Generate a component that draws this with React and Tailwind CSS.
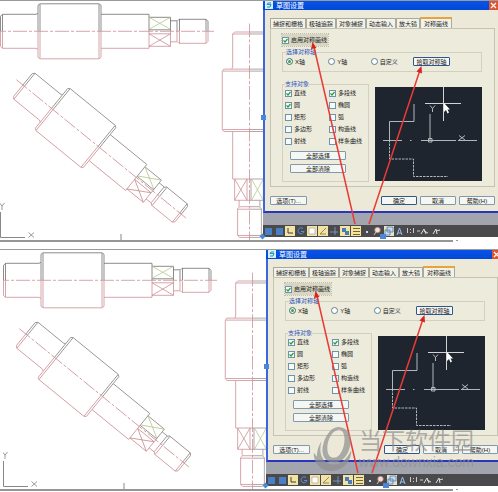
import { useId } from "react";

const TABS = ["捕捉和栅格", "极轴追踪", "对象捕捉", "动态输入", "放大镜"];

const OBJECTS = [
  { label: "直线", checked: true },
  { label: "多段线", checked: true },
  { label: "圆", checked: true },
  { label: "椭圆", checked: false },
  { label: "矩形", checked: false },
  { label: "弧", checked: false },
  { label: "多边形", checked: false },
  { label: "构造线", checked: false },
  { label: "射线", checked: false },
  { label: "样条曲线", checked: false },
];

const AXES = ["X轴", "Y轴", "自定义"];

// shaft outline along the x axis, upper half grey and lower half red
function Shaft({ transform, upper = "#6f6f6f" }) {
  return (
    <g transform={transform} fill="none" strokeWidth="0.8">
      <g stroke={upper}>
        <path d="M.5 0V-15L2.5-17H36L38-18V-26L40-27.500H99L101-26V-17H149V0M2.500 0V-17M40 0V-27M99 0V-27M38 0V-18M101 0V-17" />
        <path d="M149-14H170.500V0M149-1.500H170.500M170.500-10.500H177M177 0V-10L179-12H206L208-10V0M179.500 0V-12M206 0V-12" />
      </g>
      <path stroke="#b5c98a" d="M149-14L170.500-2M170.500-14L149-2" />
      <g stroke="#cc8f95">
        <path d="M.5 0V15L2.500 17H36L38 18V26L40 27.500H99L101 26V17H149V0M2.500 0V17M40 0V27M99 0V27M38 0V18M101 0V17" />
        <path d="M149 15H170.500V0M149 2.500H170.500M149 2.500L170.500 15M170.500 2.500L149 15M170.500 10.500H177M177 0V10L179 12H206L208 10V0M179.500 0V12M206 0V12" />
        <path strokeDasharray="14 2 3 2" d="M-8 0H214" />
      </g>
    </g>
  );
}

function Drawing() {
  return (
    <svg viewBox="0 0 263 240" preserveAspectRatio="xMaxYMin meet" className="block h-[240px] w-full">
      <Shaft transform="translate(0 31.300)" />
      <Shaft transform="translate(22.500 84.700) rotate(39.200) scale(.985)" upper="#8c8484" />
      <Shaft transform="translate(249.500 31.500) rotate(90) scale(.99)" upper="#a08c90" />
      <path d="M.5 212V237.500H25M121 234V240" fill="none" stroke="#888" />
      <path d="M-.5 203L2 206M4.500 203L2 206V210M28.500 232.500L34 237.500M34 232.500L28.500 237.500" fill="none" stroke="#999" />
    </svg>
  );
}

function Preview() {
  return (
    <svg viewBox="0 0 107 94" className="block h-[94px] w-[107px] bg-[#1e252f]">
      <g fill="none" stroke="#c3c7cb" strokeWidth="0.9">
        <path d="M39 17V34.500H14.500V53" />
        <path strokeDasharray="2.500 1" d="M14.500 53V72H38.500V89.500H73" />
        <path d="M8 53.500H27M35 53.500H36.500M46 53.500H81M83 53.500H102" />
        <path d="M55 27V53M53.500 51.500H57V55H53.500Z" />
        <path d="M55 18.500L57.500 21.500L60 18.500M57.500 21.500V25M84 48.500L90 53M90 48.500L84 53" />
        <path stroke="#e8e8e8" d="M68.500 0V34M50 16.500H86" />
      </g>
      <path fill="#fff" d="M69 16V25L71 23L72.500 26.500L74 25.500L72.500 22.500H75Z" />
    </svg>
  );
}

function Radio({ name, label, defaultChecked }) {
  return (
    <label className="flex items-center gap-[2px]">
      <input
        type="radio"
        name={name}
        defaultChecked={defaultChecked}
        className="size-[7px] appearance-none rounded-full border border-[#5d8293] bg-white checked:bg-[#3fa04c] checked:shadow-[inset_0_0_0_1px_white]"
      />
      {label}
    </label>
  );
}

function Check({ label, defaultChecked }) {
  return (
    <label className="flex h-[12px] items-center gap-[2px] whitespace-nowrap">
      <span className="grid">
        <input
          type="checkbox"
          defaultChecked={defaultChecked}
          className="peer col-start-1 row-start-1 size-[7px] appearance-none border border-[#6b94b0] bg-[#f8faf8]"
        />
        <svg viewBox="0 0 7 7" className="pointer-events-none invisible col-start-1 row-start-1 size-[7px] peer-checked:visible">
          <path d="M1.500 3.300L3 5L5.500 2" fill="none" stroke="#2f9a3c" strokeWidth="1.200" />
        </svg>
      </span>
      {label}
    </label>
  );
}

function Button({ className, children }) {
  return (
    <button
      type="button"
      className={`flex h-[9px] items-center justify-center whitespace-nowrap rounded-[1px] border bg-[#f6f6f2] leading-none ${className}`}
    >
      {children}
    </button>
  );
}

function StatusBar() {
  return (
    <div className="h-[12px] bg-[#4a4a4c]">
      <svg viewBox="0 0 184 12" className="block h-[12px] w-[184px]">
        <path fill="#4a7fc6" d="M2 3h7v7H2zM13 3h7v7h-7z" />
        <path fill="#f3e4a4" d="M22 1h10v10H22zM44 1h10v10H44zM55 1h10v10H55zM77 1h10v10H77zM88 1h10v10H88z" />
        <path fill="#e8e4c0" d="M121 1h10v10h-10z" />
        <path fill="none" stroke="#3e3e3e" d="M25 3v5h5" />
        <path fill="none" stroke="#5b8fd8" d="M40 3.500a3 3 0 1 0 1 3H38" />
        <path fill="#fff" stroke="#999" strokeWidth=".6" d="M46 3h6v6h-6z" />
        <path fill="none" stroke="#77704c" strokeWidth=".8" d="M57 9h6M57 9L63 3" />
        <path fill="none" stroke="#7fa5cf" strokeWidth=".8" d="M67 7h8M72 2v8" />
        <path fill="#477dbb" d="M79 3h4v3h3v4h-4V7h-3z" />
        <path fill="none" stroke="#75652c" d="M90 3.500h7M90 6.500h7M90 9.500h7" />
        <path fill="#c5d7ec" d="M103 6h2v2h-2z" />
        <circle cx="114.500" cy="5" r="2.800" fill="#eee1dc" stroke="#b77369" strokeWidth=".7" />
        <path stroke="#c8c8c8" d="M113 7L111 10" />
        <path fill="#c9dcf0" stroke="#426da4" strokeWidth=".7" d="M124 2h6v5h-6zM122 5h5v5h-5z" />
        <path fill="none" stroke="#9bc2f0" d="M134 10L136.500 3L139 10M135 8h3" />
        <path fill="none" stroke="#ddd" strokeWidth=".9" d="M144.500 3v5M147.500 4v1M147.500 7v1M150.500 3v5M154 6h3" />
        <path fill="none" stroke="#ddd" d="M158 9L161 4L163 9M161 6L165 8M170 9L173 4L174 9M173 6L177 5" />
      </svg>
    </div>
  );
}

function SettingsDialog() {
  const axisName = useId();

  return (
    <div className="relative w-[235px] shrink-0 text-[6px] leading-none text-[#222]">
      <div className="flex h-[10px] items-center justify-between bg-linear-to-b from-[#0a55e8] to-[#0048d8] pl-[2px] text-white">
        <div className="flex items-center gap-[3px]">
          <svg viewBox="0 0 8 8" className="size-[8px]">
            <path fill="#d9f0f7" d="M0 0h8v8H0z" />
            <path d="M6 2H3L2 3.500H6L5 6H2" fill="none" stroke="#2493bd" />
          </svg>
          <h2 className="text-[7px]">草图设置</h2>
        </div>
        <button type="button" aria-label="关闭" className="size-[9px] bg-[#dc5532]">
          <svg viewBox="0 0 9 9" className="size-[9px]">
            <path d="M2 2L7 7M7 2L2 7" stroke="#fff" strokeWidth="1.200" />
          </svg>
        </button>
      </div>

      <div className="border-b-2 border-l-2 border-b-[#2a35bd] border-l-[#3b66de] bg-[#ece9d8] pt-[7px] pr-[3px] pb-[6px] pl-[5px]">
        <div role="tablist" className="flex h-[11px] items-end">
          {TABS.map((tab) => (
            <button
              key={tab}
              type="button"
              role="tab"
              aria-selected="false"
              className="h-[10px] whitespace-nowrap border border-b-0 border-[#a9a99c] bg-[#f3f2e9] px-[2px]"
            >
              {tab}
            </button>
          ))}
          <button
            type="button"
            role="tab"
            aria-selected="true"
            className="h-[11px] whitespace-nowrap border border-t-2 border-b-0 border-[#a9a99c] border-t-[#e8a33c] bg-[#f3f2e9] px-[3px]"
          >
            对称画线
          </button>
        </div>

        <div role="tabpanel" className="h-[159px] border border-[#c5c3b2] bg-[#edebdc] pt-[5px] pr-[12px] pl-[11px]">
          <div className="flex">
            <div className="bg-[#d8d5c2] pr-px outline outline-dotted outline-[#c0bda9]">
              <Check label="启用对称画线" defaultChecked />
            </div>
          </div>

          <fieldset className="mt-[3px] h-[23px] border border-[#d3d0bd] pl-[3px]">
            <legend className="h-[6px] text-[#2b53b5]">选择对称轴</legend>
            <div className="mt-[2px] flex items-center">
              <div className="grid w-[127px] grid-cols-3">
                {AXES.map((axis, i) => (
                  <Radio key={axis} name={axisName} label={axis} defaultChecked={i === 0} />
                ))}
              </div>
              <Button className="w-[37px] border-[#2f568f]">拾取对称轴</Button>
            </div>
          </fieldset>

          <div className="mt-[9px] flex items-start justify-between">
            <fieldset className="h-[101px] w-[87px] border border-[#d3d0bd] pr-px pl-[2px]">
              <legend className="h-[6px] text-[#2b53b5]">支持对象</legend>
              <div className="grid grid-cols-[44px_auto] justify-start">
                {OBJECTS.map((item) => (
                  <Check key={item.label} label={item.label} defaultChecked={item.checked} />
                ))}
              </div>
              <div className="mt-[4px] flex flex-col gap-[4px] pl-[5px]">
                <Button className="w-[56px] border-[#7f9aaf]">全部选择</Button>
                <Button className="w-[56px] border-[#7f9aaf]">全部清除</Button>
              </div>
            </fieldset>
            <div className="pt-[6px]">
              <Preview />
            </div>
          </div>
        </div>

        <div className="mt-[9px] flex items-center gap-[3px]">
          <Button className="mr-auto w-[37px] border-[#7f9aaf]">选项(T)...</Button>
          <Button className="w-[36px] border-[#2f568f]">确定</Button>
          <Button className="w-[36px] border-[#7f9aaf]">取消</Button>
          <Button className="w-[36px] border-[#7f9aaf]">帮助(H)</Button>
        </div>
      </div>

      <div className="h-[12px] bg-[#a3a5ae]" />
      <StatusBar />

      {/* pointer arrows and selection handles on top of the dialog */}
      <svg viewBox="0 0 235 240" className="pointer-events-none absolute top-0 left-0 h-[240px] w-[235px] overflow-visible">
        <g stroke="#ea3a36" strokeWidth="1.500">
          <path d="M92 224L51 47M106 224L157 70" />
        </g>
        <path fill="#d8231f" d="M49.500 42L48 49L53.500 48ZM158.500 66L153.500 71.500L159 73.500Z" />
        <g fill="#4b87d8">
          <path d="M-2 115h5v5h-5zM117 234h6v5h-6z" />
          <path d="M-.5 233.500L2.500 236.500L-.5 239.500L-3.500 236.500Z" />
        </g>
      </svg>
    </div>
  );
}

function Watermark() {
  return (
    <div className="pointer-events-none absolute top-[177px] right-[24px] flex items-start gap-[4px] text-[#8f8f90]/70">
      <svg viewBox="0 0 44 46" className="h-[44px] w-[42px]" fill="currentColor">
        <path fillRule="evenodd" d="M27 0C36 0 41 9 39 19C37 31 29 38 20 37C11 36 8 27 11 17C14 7 20 0 27 0ZM26 3C20 4 15 13 15 22C15 29 18 33 23 32C29 31 33 21 33 13C33 6 30 2 26 3Z" />
        <path d="M9 15C6 24 8 34 16 38C25 42 35 36 40 24C41 36 30 47 17 46C7 45 0 37 1 27L4 31C4 25 6 19 9 15Z" />
      </svg>
      <div className="flex flex-col items-center">
        <span className="text-[23px] leading-[28px]">当下软件园</span>
        <span className="text-[14px] leading-[15px]">www.downxia.com</span>
      </div>
    </div>
  );
}

function Screen({ className = "", children }) {
  return (
    <section className="relative overflow-hidden border-t border-[#9b9b9b] pb-[7px]">
      <div className={`-mt-px flex h-[240px] ${className}`}>
        <div className="min-w-0 flex-1">
          <Drawing />
        </div>
        <SettingsDialog />
      </div>
      <div className="flex h-[2px] items-start">
        <hr className="mr-[3px] w-[91%] border-t-2 border-[#969696]" />
        <i className="h-px w-[2px] bg-[#999]" />
      </div>
      {children}
    </section>
  );
}

export default function App() {
  return (
    <main className="overflow-hidden bg-white font-['Liberation_Sans','Noto_Sans_CJK_SC',sans-serif]">
      <Screen />
      <Screen className="-mr-[3px] pl-[3px]">
        <Watermark />
      </Screen>
    </main>
  );
}
